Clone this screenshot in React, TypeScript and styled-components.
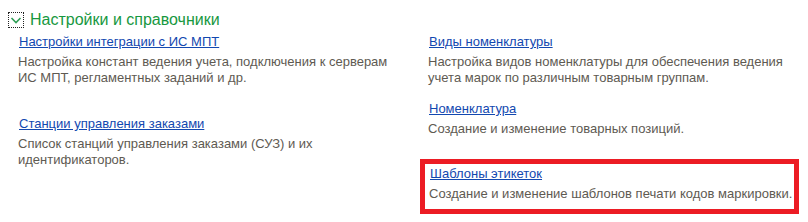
import styled, { createGlobalStyle } from 'styled-components';

const GlobalStyle = createGlobalStyle`
  html, body {
    margin: 0;
    padding: 0;
    background: #fff;
  }

  body {
    font-family: 'Liberation Sans', Arial, sans-serif;
    font-size: 13px;
  }
`;

type Item = {
  title: string;
  text: string;
  marked?: boolean;
};

const leftItems: Item[] = [
  {
    title: 'Настройки интеграции с ИС МПТ',
    text: 'Настройка констант ведения учета, подключения к серверам ИС МПТ, регламентных заданий и др.',
  },
  {
    title: 'Станции управления заказами',
    text: 'Список станций управления заказами (СУЗ) и их идентификаторов.',
  },
];

const rightItems: Item[] = [
  {
    title: 'Виды номенклатуры',
    text: 'Настройка видов номенклатуры для обеспечения ведения учета марок по различным товарным группам.',
  },
  {
    title: 'Номенклатура',
    text: 'Создание и изменение товарных позиций.',
  },
  {
    title: 'Шаблоны этикеток',
    text: 'Создание и изменение шаблонов печати кодов маркировки.',
    marked: true,
  },
];

const Chevron = () => (
  <svg width="14" height="14" viewBox="0 0 14 14">
    <polyline points="2.5,5 7,9.5 11.5,5" fill="none" stroke="#2e9e55" strokeWidth="1.6" />
  </svg>
);

const App = () => {
  return (
    <>
      <GlobalStyle />
      <Page>
        <GroupHeader>
          <Toggle>
            <Chevron />
          </Toggle>
          <GroupTitle>Настройки и справочники</GroupTitle>
        </GroupHeader>

        <Columns>
          <Column gap={30}>
            {leftItems.map((item) => (
              <Entry key={item.title}>
                <Link href="#">{item.title}</Link>
                <Note>{item.text}</Note>
              </Entry>
            ))}
          </Column>

          <Column gap={15}>
            {rightItems.map((item) =>
              item.marked ? (
                <Marked key={item.title}>
                  <Link href="#">{item.title}</Link>
                  <Note nowrap>{item.text}</Note>
                </Marked>
              ) : (
                <Entry key={item.title}>
                  <Link href="#">{item.title}</Link>
                  <Note>{item.text}</Note>
                </Entry>
              )
            )}
          </Column>
        </Columns>
      </Page>
    </>
  );
};

export default App;

const Page = styled.div`
  width: 808px;
  height: 222px;
  padding-top: 12px;
  box-sizing: border-box;
  overflow: hidden;
`;

const GroupHeader = styled.div`
  display: flex;
  align-items: center;
  height: 16px;
  padding-left: 8px;
`;

const Toggle = styled.div`
  width: 16px;
  height: 16px;
  box-sizing: border-box;
  border: 1px dotted #222;
  display: flex;
  align-items: center;
  justify-content: center;
`;

const GroupTitle = styled.span`
  margin-left: 6px;
  font-size: 16px;
  line-height: 18px;
  color: #17983f;
`;

const Columns = styled.div`
  display: grid;
  grid-template-columns: 410px 1fr;
  margin-top: 6px;
  padding-left: 18px;
`;

const Column = styled.div<{ gap: number }>`
  display: flex;
  flex-direction: column;
  gap: ${(p) => p.gap}px;
`;

const Entry = styled.div`
  display: flex;
  flex-direction: column;
  align-items: flex-start;
  max-width: 376px;
`;

const Marked = styled(Entry)`
  width: 379px;
  max-width: none;
  box-sizing: border-box;
  margin: 7px 0 0 -8px;
  padding: 2px 2px 7px 4px;
  border: 5px solid #ec1c24;
`;

const Link = styled.a`
  padding-left: 1px;
  line-height: 16px;
  color: #1248b0;
  text-decoration: underline;
  text-underline-offset: 1px;
`;

const Note = styled.div<{ nowrap?: boolean }>`
  margin-top: 4px;
  line-height: 16px;
  color: #5e5a52;
  white-space: ${(p) => (p.nowrap ? 'nowrap' : 'normal')};
`;
